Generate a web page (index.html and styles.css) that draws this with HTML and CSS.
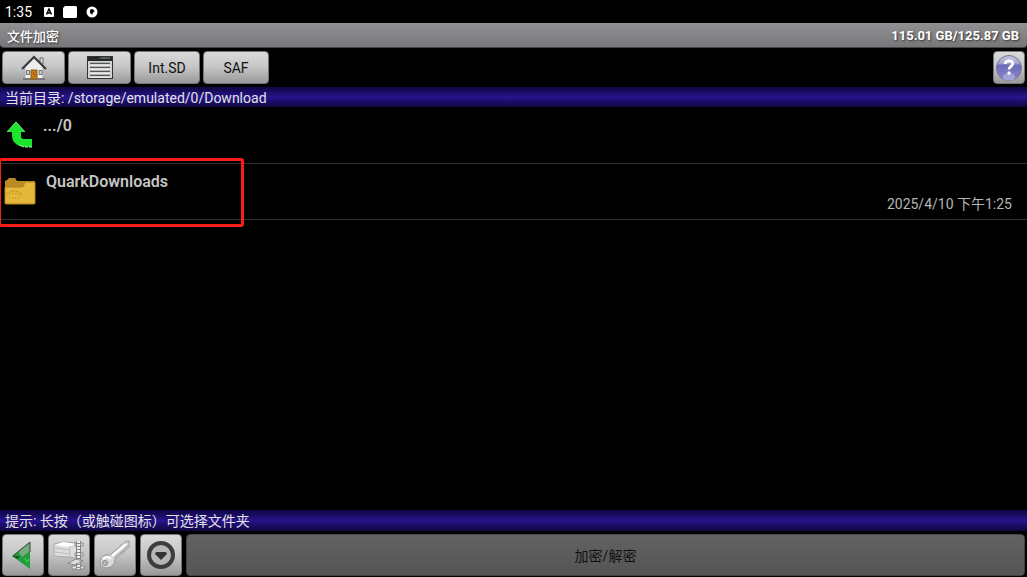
FILE: index.html
```html
<!DOCTYPE html>
<html lang="zh-CN">
<head>
<meta charset="utf-8">
<meta name="viewport" content="width=device-width, initial-scale=1">
<title>文件加密</title>
<link rel="stylesheet" href="styles.css">
</head>
<body>
<div class="app">
  <div class="status">
    <span class="clock">1:35</span>
    <svg class="status-icon" width="10" height="12" viewBox="0 0 10 12"><rect y="1" width="10" height="10" rx="1" fill="#fff"/><path d="M2.500 8.500 5 3l2.500 5.500M3.500 7h3" fill="none" stroke="#000" stroke-width="1.400"/></svg>
    <svg class="status-icon" width="14" height="12" viewBox="0 0 14 12"><path d="M2 0h11l1 1v10l-1 1H1l-1-1V2z" fill="#fff"/></svg>
    <svg class="status-icon" width="12" height="12" viewBox="0 0 12 12"><circle cx="6" cy="6" r="5.500" fill="#fff"/><path d="M4 5q0-2 2-2t2.500 2.500L6.500 7v2L4 7z" fill="#000"/></svg>
  </div>
  <header class="titlebar">
    <h1 class="title">文件加密</h1>
    <span class="space">115.01 GB/125.87 GB</span>
  </header>
  <nav class="toolbar">
    <button class="btn wide" type="button" aria-label="主目录">
      <svg width="26" height="26" viewBox="0 0 26 26"><path d="M19 3h3v6h-3z" fill="#ddd" stroke="#666"/><path d="M4 12 13 3l9 9v12H4z" fill="#eee" stroke="#aaa"/><path d="M2 24h22" stroke="#777" stroke-width="2"/><path d="M1 14 13 2l12 12" fill="none" stroke="#3c3c40" stroke-width="2.200"/><path d="M10 15h6v9h-6z" fill="#bd7d13" stroke="#8f6015"/><path d="M5.500 15.500h3v4h-3zM18 15.500h3v4h-3z" fill="#e5d6a4" stroke="#66718a"/><path d="M12 17h1v2h-1zM13 19h1v2h-1z" fill="#df3822"/></svg>
    </button>
    <button class="btn wide" type="button" aria-label="列表">
      <svg width="26" height="24" viewBox="0 0 26 24"><rect x=".5" y=".5" width="25" height="22" fill="#d2d2d2" stroke="#333"/><path d="M1 1h24v4H1z" fill="#25272a"/><path d="M11 3h12V1h-8z" fill="#515b58"/><path d="M3 7.500h20M3 11.500h20M3 15.500h20M3 19.500h20" stroke="#555" stroke-width="1.500"/><path d="M3 9h20M3 13h20M3 17h20M3 21h20" stroke="#fff"/></svg>
    </button>
    <button class="btn text" type="button">Int.SD</button>
    <button class="btn text" type="button">SAF</button>
    <button class="btn help" type="button" aria-label="帮助">
      <svg width="28" height="28" viewBox="0 0 28 28"><defs><linearGradient id="ball" x2="0" y2="1"><stop stop-color="#c5c5e2"/><stop offset=".3" stop-color="#a9a9d2"/><stop offset=".4" stop-color="#6b6bb7"/><stop offset="1" stop-color="#8b8bd0"/></linearGradient></defs><circle cx="14" cy="14" r="12.500" fill="url(#ball)" stroke="#7474a3"/><path d="M8 25q-1-6 6-6t6 6q-6 3-12 0" fill="#a3a3d6"/><path d="M10.200 10c0-4.500 8-4 7.500 0-.4 2.500-3.700 2.500-3.700 5.500" fill="none" stroke="#fff" stroke-width="2.800"/><circle cx="14" cy="19" r="1.700" fill="#fff"/></svg>
    </button>
  </nav>
  <div class="band path">当前目录: /storage/emulated/0/Download</div>
  <main class="files">
    <article class="row">
      <svg class="row-icon" width="40" height="32" viewBox="0 0 40 32"><path d="M16 3 25 13h-4v4q0 3 3 3h8v8h-8q-12-2-12-12v-3H7z" fill="#1be52d"/><path d="m16 3-9 10M25 13l-9-10" stroke="#7bee7d" fill="none"/><path d="M32 28h-8l-5-2" stroke="#b9edbc" stroke-dasharray="3 1" fill="none"/></svg>
      <h2 class="name up">.../0</h2>
    </article>
    <article class="row entry">
      <svg class="row-icon" width="40" height="32" viewBox="0 0 40 32"><path d="M5 8V5l2-1 2-2h6l2 3h4v3z" fill="#b98a25"/><path d="M5 7h13l3-2h14v7H5z" fill="#b98a25"/><path d="M5 11h18l2-5h9q1 0 1 1v20q0 1-1 1H6q-1 0-1-1z" fill="#e5b83b" stroke="#b58223"/><path d="M7 18q7-6 15 0" stroke="#a77a18" fill="none" stroke-dasharray="1 1"/><path d="M7 20q7-5 16 0M9 22h10" stroke="#b28722" fill="none" stroke-dasharray="1 2"/></svg>
      <h2 class="name">QuarkDownloads</h2>
      <time class="date" datetime="2025-04-10T13:25">2025/4/10 下午1:25</time>
      <span class="highlight"></span>
    </article>
  </main>
  <div class="band hint">提示: 长按（或触碰图标）可选择文件夹</div>
  <footer class="actions">
    <button class="btn tool" type="button" aria-label="返回">
      <svg width="32" height="32" viewBox="0 0 32 32"><path d="M23 3v27L5 17z" fill="#239c3c"/><path d="m11 12 12-9v9l-8 6z" fill="#78a87d"/><path d="M6 17 23 3v10" fill="none" stroke="#344b39"/><path d="M5 17h8l-2 3z" fill="#285133"/><path d="m18 19 2 4 2-3" stroke="#43e74e" fill="none"/></svg>
    </button>
    <button class="btn tool" type="button" aria-label="压缩">
      <svg width="34" height="32" viewBox="0 0 34 32"><path d="m2 5 9-2 14 1v15l-10-1-13-1z" fill="#dedede" stroke="#aaa"/><path d="m3 6 8-3 13 2-8 3z" fill="#fff"/><path d="m3 9 15 2M3 13l15 2M18 7v11" stroke="#bcbcbc"/><path d="M23 4h8v3h-8zM23 14h8v3h-8zM20 27h12v3H20z" fill="#e6e6e6" stroke="#888"/><path d="M26.500 2v28" stroke="#888" stroke-width="5"/><path d="M26.500 2v28" stroke="#eee" stroke-width="3" stroke-dasharray="2 1"/><path d="m16 24 8-4 7 2-9 4z" fill="#ddd" stroke="#888"/></svg>
    </button>
    <button class="btn tool" type="button" aria-label="密钥">
      <svg width="34" height="34" viewBox="0 0 34 34"><path d="M12 17 27 4l4-1v6L17 21q0 8-8 9-7 0-7-7 2-7 10-6z" fill="#d8d8d8" stroke="#999"/><path d="M14 18 28 6" stroke="#fff" stroke-width="2"/><path d="m16 20 14-12M23 15l2 1m0-3 2 1" stroke="#999"/><circle cx="7" cy="25" r="2.500" fill="#bbb" stroke="#888"/><path d="M5 21q4-4 8 0" fill="none" stroke="#fff" stroke-width="2"/></svg>
    </button>
    <button class="btn tool" type="button" aria-label="更多">
      <svg width="30" height="30" viewBox="0 0 30 30"><circle cx="15" cy="15" r="12" fill="#b6b6b6" stroke="#3c3c3c" stroke-width="4"/><path d="M10 12h10l1 2-6 6-6-6z" fill="#333"/></svg>
    </button>
    <button class="btn encrypt" type="button" disabled>加密/解密</button>
  </footer>
</div>
</body>
</html>
```
FILE: styles.css
```css
* { box-sizing: border-box; }
body { margin: 0; background: #000; font-family: Roboto, "Noto Sans CJK SC", sans-serif; font-size: 14px; color: #e2e2e2; }
h1, h2 { margin: 0; }
svg { display: block; flex: none; }
.app { display: flex; flex-direction: column; min-height: 100vh; }
.status { display: flex; align-items: center; height: 23px; padding-left: 5px; color: #fff; }
.clock { width: 39px; }
.status-icon { margin-right: 9px; }
.titlebar { display: flex; align-items: center; justify-content: space-between; height: 25px; padding: 0 8px 0 7px; background: linear-gradient(#919194, #77777a); border-bottom: 1px solid #454547; border-radius: 0 0 4px 4px; color: #fff; text-shadow: 1px 1px 2px #333; }
.title { font-size: 13px; font-weight: 500; }
.space { font-size: 13px; font-weight: 700; }
.toolbar { display: flex; gap: 3px; padding: 3px 2px; }
.btn { display: flex; align-items: center; justify-content: center; height: 33px; padding: 0; border: 1px solid #777; border-radius: 4px; background: linear-gradient(#dadada, #c5c5c5 50%, #999); color: #111; font: inherit; }
.wide { width: 63px; }
.text { width: 66px; }
.help { width: 32px; margin-left: auto; }
.band { height: 21px; padding-left: 5px; line-height: 22px; background: linear-gradient(#0c0740, #28138b 50%, #0c0740); white-space: nowrap; }
.path { height: 20px; }
.files { flex: 1; }
.row { position: relative; display: flex; height: 57px; padding: 11px 15px 0 0; border-bottom: 1px solid #303030; }
.entry { height: 56px; padding-top: 8px; }
.row-icon { margin-top: 1px; }
.entry .row-icon { margin-top: 4px; }
.name { margin-left: 6px; font-size: 16px; line-height: 19px; font-weight: 600; color: #c5c5c5; }
.up { margin-left: 3px; line-height: 15px; }
.date { margin: 0 0 7px auto; align-self: flex-end; line-height: 16px; color: #b5b5b5; }
.highlight { position: absolute; left: -1px; top: -6px; width: 245px; height: 69px; border: 3px solid #f91d12; border-left-width: 2px; border-radius: 3px; pointer-events: none; }
.actions { display: flex; gap: 4px; padding: 3px 2px 1px; }
.actions .btn { height: 42px; }
.tool { width: 42px; }
.actions .encrypt { flex: 1; border-color: #444; background: linear-gradient(#626262, #555); color: #111; }
```
